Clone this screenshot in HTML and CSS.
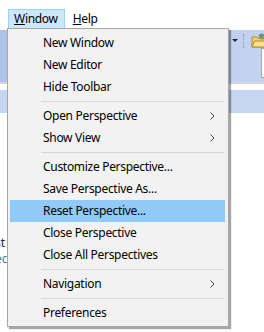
FILE: index.html
```html
<!DOCTYPE html>
<html lang="en">
<head>
  <meta charset="UTF-8" />
  <title>Window menu</title>
  <link rel="stylesheet" href="styles.css">
</head>
<body>
  <div class="screen">
    <div class="menubar">
      <span class="menu-title open"><u>W</u>indow</span>
      <span class="menu-title"><u>H</u>elp</span>
    </div>

    <div class="toolbar">
      <div class="tb-row">
        <span class="tb-drop"></span>
        <span class="tb-grip"></span>
        <svg class="tb-icon" width="16" height="16" viewBox="0 0 16 16">
          <path d="M1 4h5l1 1.5h7v8.5H1z" fill="#f2cf6b" stroke="#b58a2a" stroke-width="1"/>
          <path d="M1 14l2.5-6H16l-2.5 6z" fill="#f7e09a" stroke="#b58a2a" stroke-width="1"/>
          <circle cx="11" cy="3.5" r="3" fill="#6fa85a"/>
          <circle cx="9.5" cy="2.5" r="1.6" fill="#8a6fb8"/>
        </svg>
      </div>
      <div class="tb-row second">
        <span class="tb-box"></span>
      </div>
    </div>
    <div class="rule"></div>
    <div class="tabband"></div>

    <div class="editor">
      <div class="code">st</div>
      <div class="code comment">ec</div>
    </div>
    <div class="hint">( Ctrl+Shift+W )</div>

    <!-- dropdown for the Window menu -->
    <div class="dropdown">
      <div class="item">New Window</div>
      <div class="item">New Editor</div>
      <div class="item">Hide Toolbar</div>
      <div class="sep"></div>
      <div class="item sub">Open Perspective <svg class="arrow" width="5" height="8" viewBox="0 0 5 8"><polyline points="0.5,0.5 4,4 0.5,7.5" fill="none" stroke="#444" stroke-width="1"/></svg></div>
      <div class="item sub">Show View <svg class="arrow" width="5" height="8" viewBox="0 0 5 8"><polyline points="0.5,0.5 4,4 0.5,7.5" fill="none" stroke="#444" stroke-width="1"/></svg></div>
      <div class="sep"></div>
      <div class="item">Customize Perspective...</div>
      <div class="item">Save Perspective As...</div>
      <div class="item active">Reset Perspective...</div>
      <div class="item">Close Perspective</div>
      <div class="item">Close All Perspectives</div>
      <div class="sep"></div>
      <div class="item sub">Navigation <svg class="arrow" width="5" height="8" viewBox="0 0 5 8"><polyline points="0.5,0.5 4,4 0.5,7.5" fill="none" stroke="#444" stroke-width="1"/></svg></div>
      <div class="sep"></div>
      <div class="item">Preferences</div>
    </div>
  </div>
</body>
</html>
```

FILE: styles.css
```css
* { box-sizing: border-box; }

html, body {
  margin: 0;
  padding: 0;
  background: #fff;
}

body {
  font-family: "Noto Sans", "Open Sans", sans-serif;
  font-size: 12px;
  color: #000;
}

.screen {
  position: relative;
  width: 264px;
  height: 332px;
  overflow: hidden;
}

.menubar {
  height: 28px;
  padding: 9px 0 0 8px;
  display: flex;
  gap: 2px;
  background: #fff;
  letter-spacing: -0.3px;
}

.menu-title {
  height: 19px;
  line-height: 17px;
  padding: 0 6px 0 5px;
  border: 1px solid transparent;
}

.menu-title.open {
  background: #cce8ff;
  border-color: #99d1ff;
  border-bottom: none;
}

.toolbar {
  margin-top: 2px;
  height: 52px;
  background: linear-gradient(to right, #adc3e9, #c3d4f0);
  display: flex;
  flex-direction: column;
}

.tb-row {
  height: 18px;
  display: flex;
  align-items: center;
  justify-content: flex-end;
  padding-top: 3px;
}

.tb-drop {
  width: 0;
  height: 0;
  border-left: 3px solid transparent;
  border-right: 3px solid transparent;
  border-top: 3px solid #1a2a4a;
  margin-right: 5px;
}

.tb-grip {
  width: 1px;
  height: 14px;
  border-left: 1px dotted #8a98b8;
  margin-right: 7px;
}

.tb-icon {
  margin-right: -3px;
  flex: none;
}

.tb-row.second {
  height: 34px;
  padding-top: 0;
  align-items: flex-start;
}

.tb-box {
  width: 10px;
  height: 30px;
  margin-right: -7px;
  background: #fff;
  border: 1px solid #a8a8a8;
}

.rule {
  height: 2px;
  background: #d4d8de;
}

.tabband {
  margin-top: 6px;
  height: 23px;
  background: #c6d6f1;
}

.editor {
  padding-top: 122px;
  font-size: 12px;
  line-height: 16px;
}

.code {
  margin-left: -5px;
  color: #222;
}

.code.comment {
  color: #3f7f7f;
}

.hint {
  margin-top: 65px;
  padding-left: 44px;
  font-size: 13px;
  color: #222;
}

.dropdown {
  position: absolute;
  top: 28px;
  left: 7px;
  width: 222px;
  height: 299px;
  padding: 3px 3px 2px 2px;
  background: #f2f2f2;
  border: 1px solid #a6a6a6;
  box-shadow: 2px 2px 1px rgba(0, 0, 0, 0.35);
  letter-spacing: -0.3px;
}

.item {
  height: 22px;
  line-height: 22px;
  padding-left: 33px;
  padding-right: 10px;
  display: flex;
  align-items: center;
  justify-content: space-between;
  white-space: nowrap;
}

.item.active {
  background: #91c9f7;
}

.arrow {
  flex: none;
}

.sep {
  height: 1px;
  margin: 3px 1px 3px 31px;
  background: #d7d7d7;
}
```
